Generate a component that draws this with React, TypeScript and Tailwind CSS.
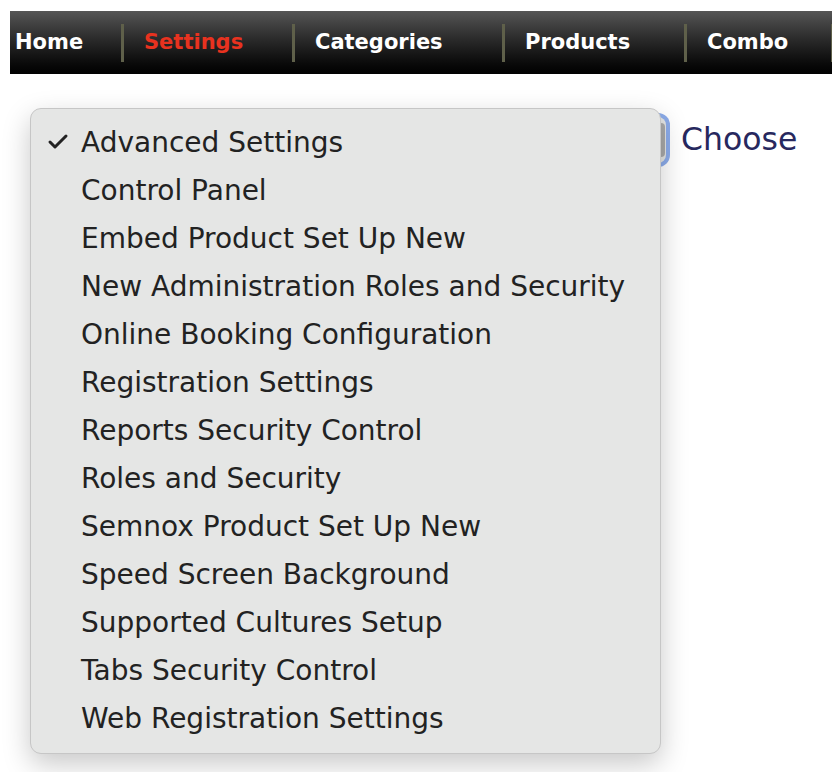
import { Check } from "lucide-react";

const navItems = [
  { label: "Home", w: "w-[111px]", active: false },
  { label: "Settings", w: "w-[171px]", active: true },
  { label: "Categories", w: "w-[210px]", active: false },
  { label: "Products", w: "w-[182px]", active: false },
  { label: "Combo", w: "w-[147px]", active: false },
];

const options = [
  "Advanced Settings",
  "Control Panel",
  "Embed Product Set Up New",
  "New Administration Roles and Security",
  "Online Booking Configuration",
  "Registration Settings",
  "Reports Security Control",
  "Roles and Security",
  "Semnox Product Set Up New",
  "Speed Screen Background",
  "Supported Cultures Setup",
  "Tabs Security Control",
  "Web Registration Settings",
];

export default function App() {
  return (
    <div className="relative w-[832px] h-[772px] bg-white overflow-hidden font-['DejaVu_Sans',sans-serif]">
      {/* top menu bar */}
      <div className="pt-[11px] pl-[10px]">
        <div className="flex h-[63px] w-[840px] items-center bg-gradient-to-b from-[#565656] via-[#262626] to-[#020202]">
          {navItems.map((item, i) => (
            <div key={item.label} className={`flex h-full items-center ${item.w}`}>
              {i > 0 && <div className="h-[38px] w-[3px] bg-[#5f604a]" />}
              <span
                className={`${i > 0 ? "ml-[20px]" : "ml-[5px]"} text-[21px] font-bold ${
                  item.active ? "text-[#e8321f]" : "text-white"
                }`}
              >
                {item.label}
              </span>
            </div>
          ))}
          <div className="h-[38px] w-[3px] bg-[#5f604a]" />
        </div>
      </div>

      {/* select row behind the open list */}
      <div className="flex items-center pl-[36px] pt-[43px]">
        <div className="h-[46px] w-[630px] rounded-[8px] bg-[#e4e5e4] ring-[4px] ring-[#8cacea] flex justify-end items-center pr-[1px]">
          <div className="h-[34px] w-[5px] rounded-r-[4px] bg-[#a9a9a9]" />
        </div>
        <span className="ml-[15px] text-[31.5px] leading-none text-[#27285e]">Choose</span>
      </div>

      {/* open option list */}
      <div className="absolute left-[30px] top-[108px] w-[631px] rounded-[11px] border border-[#c6c6c6] bg-[#e5e6e5] py-[10px] shadow-[0_10px_28px_rgba(0,0,0,0.22)]">
        {options.map((opt, i) => (
          <div key={opt} className="relative flex h-[48px] items-center pl-[50px] text-[28px] text-[#222222]">
            {i === 0 && (
              <Check className="absolute left-[15px] top-[11px] h-[24px] w-[24px]" strokeWidth={3} />
            )}
            {opt}
          </div>
        ))}
      </div>
    </div>
  );
}
